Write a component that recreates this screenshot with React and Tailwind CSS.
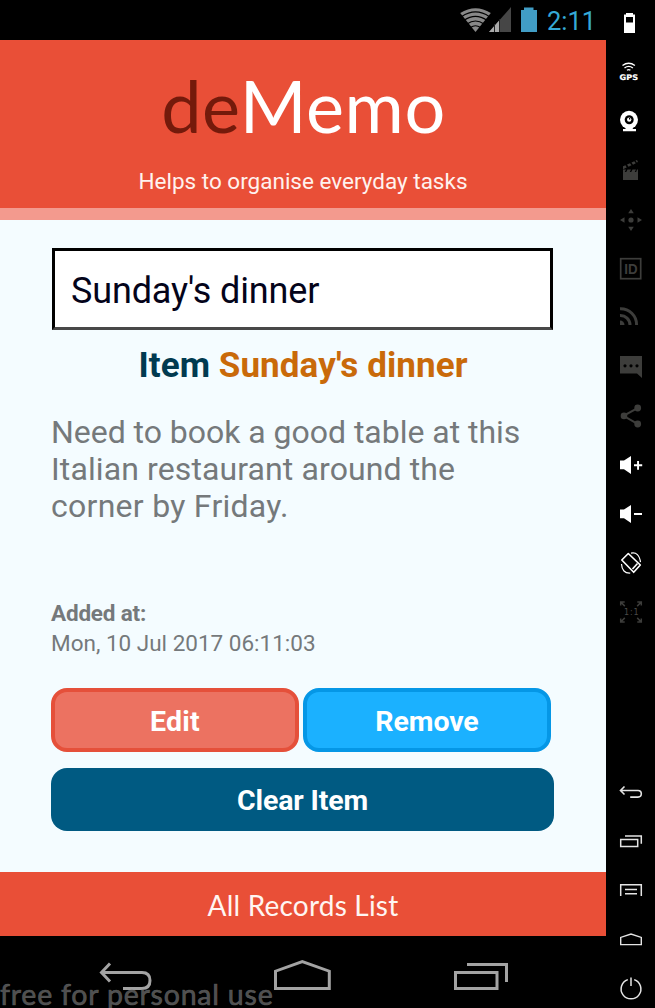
function Cell({ y, h = 49, children }) {
  return (
    <svg width="49" height={h} viewBox={`606 ${y} 49 ${h}`} className="block shrink-0">
      {children}
    </svg>
  );
}

const DIM = '#3d3d3b';

function Toolbar() {
  return (
    <aside className="flex w-[49px] shrink-0 flex-col justify-between bg-black">
      <div className="flex flex-col">
        <Cell y={0}>
          <path fill="#fff" fillRule="evenodd" d="M626 13h7v1.500h2V33h-11V14.500h2zM626 17v5.500h7V17z" />
        </Cell>
        <Cell y={49}>
          <g fill="none" stroke="#fff" strokeWidth="1.400">
            <path d="M622.500 65.500q6.200-4.500 12.400 0M624.500 68q4.200-3.200 8.400 0" />
            <path d="M627 70.300q1.700-1.300 3.400 0" />
          </g>
          <text x="619.5" y="79.800" fill="#fff" stroke="#fff" strokeWidth="0.200" fontFamily="DejaVu Sans" fontWeight="700" fontSize="7.700" textLength="18.500" lengthAdjust="spacingAndGlyphs">GPS</text>
        </Cell>
        <Cell y={98}>
          <circle cx="629" cy="119.800" r="9" fill="#fff" />
          <circle cx="629.2" cy="119.800" r="4.500" fill="#000" />
          <circle cx="629.2" cy="119.600" r="2.200" fill="#fff" />
          <path d="M629 118h1.300v1.500h-1.300z" fill="#000" />
          <path fill="#fff" d="M626 127h6l1 2h3v2.300h-13V129h2.500z" />
        </Cell>
        <Cell y={147}>
          <path fill={DIM} d="M623 172h15v8h-15zM623 169.500h3l-1.500 3h-1.500zM627.500 169.500h3.500l-1.500 3h-3.500zM632.500 169.500h3.500l-1.500 3h-3.500zM637 169.500h1v3h-2zM623 166.300l2.500-1 1.200 2.200-3.700 1.700zM627 164.500l3-1.300 1.500 2.100-3 1.400zM631.500 162.500l2.800-1.200 1.500 2-2.800 1.400zM635.500 160.600l1.500-.6 1 2-1.200.6z" />
        </Cell>
        <Cell y={196}>
          <g fill={DIM}>
            <circle cx="631" cy="220" r="2.600" />
            <path d="M631 209l2.800 4.300h-5.600zM631 231l2.800-4.300h-5.600zM620 220l4.500-2.800v5.600zM642 220l-4.500-2.800v5.600z" />
          </g>
        </Cell>
        <Cell y={245}>
          <rect x="620.700" y="258.700" width="20" height="20" fill="none" stroke={DIM} strokeWidth="1.700" />
          <text x="624.300" y="273.900" fill={DIM} fontFamily="Liberation Sans" fontWeight="700" fontSize="14" textLength="13.300" lengthAdjust="spacingAndGlyphs">ID</text>
        </Cell>
        <Cell y={294}>
          <g fill="none" stroke={DIM} strokeWidth="3">
            <path d="M620 308.700a16 16 0 0 1 16.600 16.300M620 315.500a9.500 9.500 0 0 1 10 9.500" />
          </g>
          <path fill={DIM} d="M620 320.500a4.500 4.500 0 0 1 4.500 4.500H620z" />
        </Cell>
        <Cell y={343}>
          <path fill={DIM} d="M620 356h22v22l-5-4.500h-17z" />
          <g fill="#000">
            <circle cx="625" cy="365.800" r="1.600" />
            <circle cx="631" cy="365.800" r="1.600" />
            <circle cx="637" cy="365.800" r="1.600" />
          </g>
        </Cell>
        <Cell y={392}>
          <path d="M637.500 408.200l-14 7.600 14 8" fill="none" stroke={DIM} strokeWidth="2" />
          <g fill={DIM}>
            <circle cx="637.700" cy="408" r="3.400" />
            <circle cx="624" cy="415.900" r="3.300" />
            <circle cx="637.700" cy="424" r="3.400" />
          </g>
        </Cell>
        <Cell y={441}>
          <path fill="#fff" d="M620 460.500h4l7-4.500v18l-7-4.700h-4zM634 464.300h3.100V461h1.900v3.300h3.200v2h-3.200v3.500h-1.900v-3.500H634z" />
        </Cell>
        <Cell y={490}>
          <path fill="#fff" d="M620 509.500h4l7-4.500v18l-7-4.700h-4zM634 513h8v2h-8z" />
        </Cell>
        <Cell y={539}>
          <g fill="none" stroke="#fff">
            <path strokeWidth="1.600" strokeLinejoin="round" d="M628.300 553.500L640.300 565l-6.600 7.300L621.800 560z" />
            <path strokeWidth="1.600" d="M632.500 569l5-5.500" />
            <path strokeWidth="1.200" d="M631 553.200q8-1.700 9.500 9M621.500 564q.5 9.500 8.800 9" />
          </g>
        </Cell>
        <Cell y={588}>
          <g fill="none" stroke={DIM} strokeWidth="1.500">
            <path d="M620.700 605.500v-3.500h4M621 602.300l3.800 3.800M637.300 602h4v3.500M641 602.300l-3.800 3.800M620.700 618.500v3.500h4M621 621.700l3.800-3.800M637.300 622h4v-3.500M641 621.700l-3.800-3.800" />
          </g>
          <text x="624" y="615" fill="#4a4a48" fontFamily="DejaVu Sans" fontSize="8" textLength="14.500">1:1</text>
        </Cell>
      </div>
      <div className="flex flex-col">
        <Cell y={768}>
          <path fill="none" stroke="#e4e4e4" strokeWidth="1.600" d="M624.500 786.500l-4 4 4 4M620.500 790.500H638a3.300 3.300 0 0 1 0 6.600h-7.800" />
        </Cell>
        <Cell y={817}>
          <path fill="none" stroke="#e4e4e4" strokeWidth="1.500" d="M620.700 839.500h17v7h-17zM625 836h16.300v7.800" />
        </Cell>
        <Cell y={866}>
          <path fill="none" stroke="#e4e4e4" strokeWidth="1.500" d="M620.700 896v-11.300h20.600V896M625 889.500h12M625 893.700h12" />
        </Cell>
        <Cell y={915}>
          <path fill="none" stroke="#e4e4e4" strokeWidth="1.400" d="M620.700 944.600v-7.200l10.300-3.300 10.300 3.300v7.200z" />
        </Cell>
        <Cell y={964} h={44}>
          <path fill="none" stroke="#e4e4e4" strokeWidth="1.500" d="M627.800 979.600a9.900 9.900 0 1 0 6.400 0M631 977.500v8.500" />
        </Cell>
      </div>
    </aside>
  );
}

function StatusBar() {
  return (
    <div className="flex h-10 items-start justify-end bg-black">
      <svg width="84" height="40" viewBox="457 0 84 40" className="block">
        <path d="M475.500 32l-15.300-19q15.300-9.500 30.600 0z" fill="#888" />
        <g fill="none" stroke="#000" strokeWidth="1.200">
          <path d="M461.500 16.700q14-9.500 28 0M464 20.300q11.500-8 23 0M467 24q8.500-6 17 0M470.500 27.500q5-3.500 10 0" />
        </g>
        <path d="M511 7v25h-22z" fill="#464646" />
        <path d="M500 19.500V32h-11z" fill="#aaa" />
        <path d="M494.500 24v8M499.500 19v13" stroke="#222" strokeWidth="1" />
        <path d="M524 7.500h9.500V10h3.500v22h-16V10h3z" fill="#419dc5" />
      </svg>
      <span className="mr-[11px] ml-[6px] w-[48px] whitespace-nowrap font-['Roboto',sans-serif] text-[25.500px] leading-[42px] text-[#35a9d6]">2:11</span>
    </div>
  );
}

function NavBar() {
  return (
    <nav className="relative flex h-[72px] bg-black">
      <svg width="202" height="72" viewBox="0 936 202 72" className="block">
        <path fill="none" stroke="#a3a3a3" strokeWidth="3" d="M110 963.500l-8.500 9 8.500 9M101.500 972.500H142q8 0 8 8t-8 8h-19" />
      </svg>
      <svg width="202" height="72" viewBox="202 936 202 72" className="block">
        <path fill="none" stroke="#a3a3a3" strokeWidth="3" d="M275.500 988.500v-17.300l26.800-9.500 27 9.500v17.300z" />
      </svg>
      <svg width="202" height="72" viewBox="404 936 202 72" className="block">
        <path fill="none" stroke="#a3a3a3" strokeWidth="3" d="M455.500 972.500H497v16h-41.500zM467 964.500h39.500v17.500" />
      </svg>
      <span className="absolute bottom-0 left-0 whitespace-nowrap font-['Lato',sans-serif] text-[28.500px] leading-[28px] tracking-[0.780px] text-[#5e5e5e]/85 [-webkit-text-stroke:0.700px_#5e5e5ed9]">
        free for personal use
      </span>
    </nav>
  );
}

export default function App() {
  return (
    <div className="flex h-[1008px] w-[655px] overflow-hidden bg-black font-['Roboto',sans-serif]">
      <div className="flex w-[606px] shrink-0 flex-col">
        <StatusBar />
        <header className="h-[180px] border-b-[12px] border-[#f39a8e] bg-[#e94f37] text-center text-white">
          <h1 className="pt-[22px] pl-px font-['Lato',sans-serif] text-[72px] leading-[86px] tracking-[0.600px]">
            <span className="text-[#741a0b]">de</span>Memo
          </h1>
          <p className="pt-[18px] text-[22.500px] leading-[30px] text-[#fff2ee]">Helps to organise everyday tasks</p>
        </header>
        <main className="flex h-[652px] flex-col bg-[#f4fcff] pt-[28px] pr-[52px] pl-[51px]">
          <div className="ml-px flex h-[82px] w-[501px] items-center border-[3px] border-b-[#484848] border-black bg-white pt-[3px] pl-[16px] text-[36px] tracking-[-0.150px] text-[#04041a]">
            Sunday's dinner
          </div>
          <h2 className="mt-[16px] pl-px text-center text-[35px] leading-[40px] font-bold tracking-[0.080px] text-[#003a50]">
            Item <span className="text-[#c96a0a]">Sunday's dinner</span>
          </h2>
          <p className="mt-[28px] text-[32px] leading-[37px] whitespace-nowrap text-[#75797b]">
            <span className="tracking-[-0.030px]">Need to book a good table at this</span>
            <br />
            <span className="tracking-[0.110px]">Italian restaurant around the</span>
            <br />
            <span className="tracking-[0.270px]">corner by Friday.</span>
          </p>
          <p className="mt-[73px] text-[22.500px] leading-[30px] text-[#75797b]">
            <b className="tracking-[-0.200px]">Added at:</b>
            <br />
            Mon, 10 Jul 2017 06:11:03
          </p>
          <div className="mt-[30px] flex gap-[4px] text-[28.500px] font-bold text-white">
            <button className="h-[64px] w-[248px] rounded-[16px] border-4 border-[#e5503a] bg-[#ec7261] pt-[4px] tracking-[0.200px]">Edit</button>
            <button className="h-[64px] w-[248px] rounded-[16px] border-4 border-[#0597e6] bg-[#1bb1ff] pt-[4px] tracking-[-0.100px]">Remove</button>
          </div>
          <button className="mt-[16px] h-[63px] rounded-[16px] bg-[#005a82] pt-[3px] text-[28.500px] font-bold tracking-[-0.150px] text-white">
            Clear Item
          </button>
        </main>
        <footer className="flex h-[64px] items-center justify-center bg-[#e94f37] pt-px font-['Lato',sans-serif] text-[28px] tracking-[0.200px] text-[#fff5f2]">
          All Records List
        </footer>
        <NavBar />
      </div>
      <Toolbar />
    </div>
  );
}
